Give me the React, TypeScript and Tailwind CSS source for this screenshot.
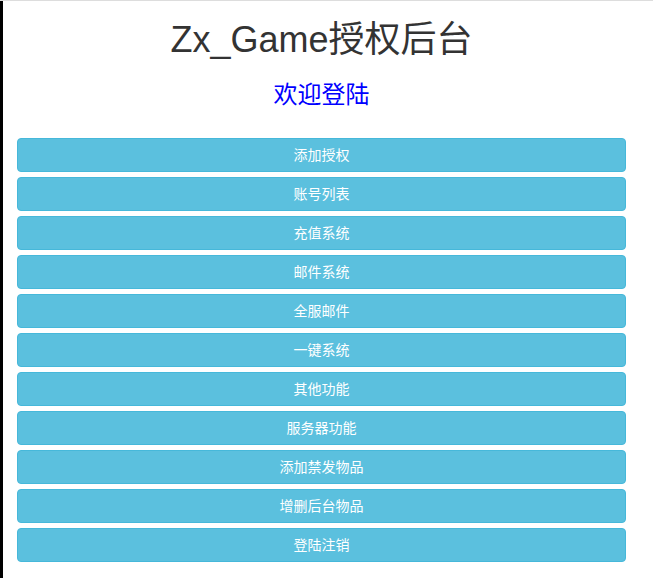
const items = [
  '添加授权',
  '账号列表',
  '充值系统',
  '邮件系统',
  '全服邮件',
  '一键系统',
  '其他功能',
  '服务器功能',
  '添加禁发物品',
  '增删后台物品',
  '登陆注销',
];

export default function App() {
  return (
    <div className="h-[578px] w-[653px] bg-white border-t border-[#dddddd] font-['Liberation_Sans','Noto_Sans_CJK_SC',sans-serif] overflow-hidden">
      <div className="flex h-full">
        <div className="w-[3px] bg-black" />
        <div className="w-[637px] px-[14px]">
          <h1 className="mt-[19px] text-center text-[36px] leading-[40px] text-[#333333]">
            Zx_Game授权后台
          </h1>
          <h3 className="mt-[22px] text-center text-[24px] leading-[26px] text-[#0000ff]">
            欢迎登陆
          </h3>
          <div className="mt-[30px] flex flex-col gap-[5px]">
            {items.map((label) => (
              <button
                key={label}
                className="h-[34px] w-full rounded-[4px] border border-[#46b8da] bg-[#5bc0de] text-[14px] text-white"
              >
                {label}
              </button>
            ))}
          </div>
        </div>
      </div>
    </div>
  );
}
